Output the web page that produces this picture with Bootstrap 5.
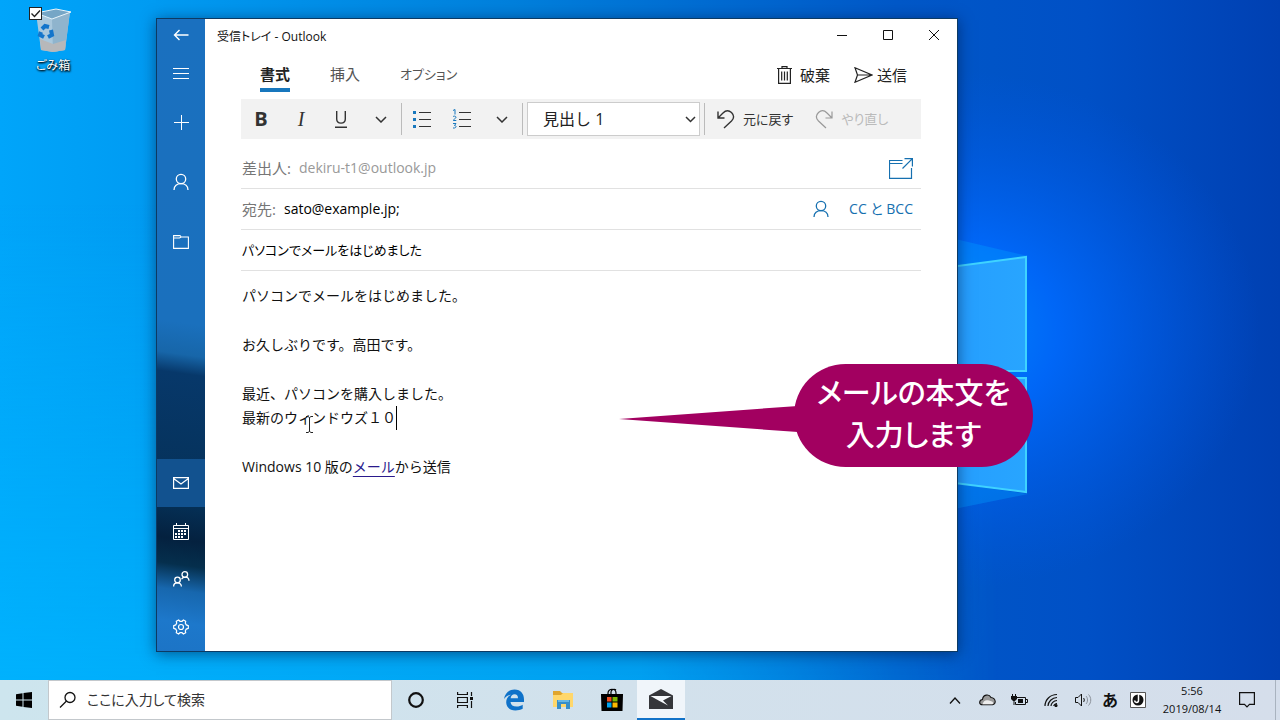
<!DOCTYPE html>
<html lang="ja">
<head>
<meta charset="utf-8">
<meta name="viewport" content="width=device-width, initial-scale=1">
<title>受信トレイ - Outlook</title>
<link rel="stylesheet" href="https://cdn.jsdelivr.net/npm/bootstrap@5.3.0/dist/css/bootstrap.min.css">
<style>
  body { font-family: "Open Sans", "Noto Sans CJK JP", sans-serif; font-feature-settings: "palt"; font-size: 14px; line-height: 20px; color: #222; }
  button, input, select { font-feature-settings: inherit; }
  button { color: inherit; }
  svg { display: block; fill: none; }
  :where(svg:not([stroke])) { stroke: currentColor; }
  .plain { border: 0; background: transparent; padding: 0; display: flex; align-items: center; justify-content: center; }
  .desk { background: #0078e0; min-height: 0; }
  .wallpaper { position: absolute; width: 100%; height: 100%; }

  .desk-icon { position: absolute; left: 16px; top: 4px; width: 74px; color: #fff; font-size: 12px; line-height: 16px; text-shadow: 0 1px 2px #000, 1px 1px 2px #000; }
  .desk-icon input { position: absolute; left: 13px; top: 3px; width: 13px; height: 13px; margin: 0; appearance: none; background: #fff; border: 1px solid #222; }
  .desk-icon .tick { position: absolute; left: 14px; top: 4px; color: #222; }
  .desk-icon label { padding-top: 4px; }

  .app-window { position: absolute; left: 156px; right: 322px; top: 18px; bottom: 28px; background: #fff; border: 1px solid #0c3a63; box-shadow: 0 2px 14px rgba(0,20,60,.55); }
  .rail { width: 48px; color: #fff; background:
    linear-gradient(188deg, #1a70bf 0%, #1a70bd 48%, #1766a9 53%, #07386a 56%, #053158 76%, #04213f 82%, #052f4d 86%, #1767ae 90%, #1d78cb 95%, #1c74c6 100%); }
  .rail .plain { width: 48px; height: 48px; flex: none; }
  .rail .back { height: 31px; }
  .rail .spaced { margin-top: 12px; }
  .rail .current { background: #12528f; }

  .title-bar { height: 32px; font-size: 12px; color: #111; }
  .title-bar .plain { width: 46px; height: 32px; }
  .tabs { height: 48px; gap: 40px; padding: 0 14px 0 19px; }
  .tabs .tab { height: 38px; margin-top: 3px; border-bottom: 4px solid transparent; padding-top: 6px; align-self: flex-start; color: #555; font-size: 15px; }
  .tabs .tab.current { color: #222; font-weight: 700; border-color: #1777bd; }
  .tabs .tab.kana { font-size: 13px; }
  .tabs .command { font-size: 15px; gap: 8px; }
  .content { padding: 0 36px; }
  .format-bar { height: 40px; background: #f2f2f2; margin-bottom: 9px; color: #333; font-size: 13px; }
  .format-bar .tool { width: 40px; height: 40px; font-size: 20px; }
  .format-bar .slanted { font-family: "Liberation Serif", serif; font-style: italic; }
  .format-bar .rule { width: 1px; height: 32px; background: #bbb; }
  .format-bar .redo { color: #bbb; margin-left: 22px; }
  .style-pick { width: 173px; height: 34px; margin: 0 4px; }
  .style-pick select { width: 100%; height: 34px; appearance: none; background: #fff; border: 1px solid #ccc; padding: 0 28px 0 15px; font-size: 16px; color: #222; border-radius: 0; font-feature-settings: normal; }
  .style-pick svg { position: absolute; right: 4px; top: 14px; }
  .field { height: 41px; border-bottom: 1px solid #e1e1e1; color: #767676; padding-left: 1px; }
  .field label { font-size: 15px; }
  .field input { border: 0; padding: 0; background: transparent; outline: 0; color: #000; min-width: 0; }
  .field input:disabled { color: #999; }
  .field .subject { font-size: 13px; }
  .accent, .accent:hover { color: #1670b0; text-decoration: none; }
  .letter { padding: 13px 1px 0; line-height: 24px; font-feature-settings: normal; color: #111; outline: 0; }
  .letter p { margin: 0 0 25px; }
  .letter a { color: #2a1a8c; text-underline-offset: 4px; }
  .caret { display: inline-block; width: 1px; height: 24px; background: #000; vertical-align: top; }
  .pointer { position: absolute; left: 304px; top: 416px; color: #222; }

  .callout { position: absolute; right: 247px; top: 364px; width: 239px; height: 103px; border-radius: 52px; background: #a20060; color: #fff; font-size: 29px; font-weight: 500; line-height: 42px; padding-top: 8px; }
  .callout svg { position: absolute; right: 235px; top: 41px; }

  .taskbar { height: 40px; background: linear-gradient(90deg, #cde5ee, #d2e1ec 50%, #d5deeb); color: #111; flex: none; }
  .taskbar .plain { width: 48px; height: 40px; flex: none; }
  .taskbar .active-app { background: #f0f5fa; border-bottom: 2px solid #1272c8; }
  .task-list { gap: 1px; }
  .search { width: 344px; height: 40px; background: #fff; border: 1px solid #c3c8cc; gap: 10px; padding-left: 10px; }
  .search input { border: 0; outline: 0; padding: 0; background: transparent; min-width: 0; }
  .search input::placeholder { color: #333; opacity: 1; }
  .taskbar .tray { width: 32px; }
  .taskbar .ime { width: 22px; font-size: 16px; font-weight: 700; }
  .taskbar .ime-state { width: 34px; }
  .taskbar .clock { width: 74px; font-size: 11px; line-height: 18px; flex-direction: column; }
  .taskbar .notice { width: 36px; }
  .show-desk { width: 5px; border-left: 1px solid #a9b3bf; margin-left: 10px; }
</style>
</head>
<body class="d-flex flex-column vh-100 overflow-hidden">

<main class="desk position-relative flex-grow-1">
  <svg class="wallpaper" viewBox="0 0 1280 680" preserveAspectRatio="none" stroke="none" aria-hidden="true">
    <defs>
      <linearGradient id="base"><stop offset="0" stop-color="#00a5fa"/><stop offset=".12" stop-color="#009bf2"/><stop offset=".4" stop-color="#0080dc"/><stop offset=".7" stop-color="#0058c8"/><stop offset=".85" stop-color="#0050c6"/><stop offset="1" stop-color="#0040b2"/></linearGradient>
      <linearGradient id="low" x2="0" y2="1"><stop offset=".3" stop-color="#00b8ff" stop-opacity="0"/><stop offset="1" stop-color="#00b8ff" stop-opacity=".65"/></linearGradient>
      <linearGradient id="fade"><stop offset="0" stop-color="#fff"/><stop offset=".5" stop-color="#fff"/><stop offset=".78" stop-color="#000"/></linearGradient>
      <mask id="left"><path fill="url(#fade)" d="M0 0H1280V680H0Z"/></mask>
      <radialGradient id="glow"><stop offset="0" stop-color="#0088ff"/><stop offset=".35" stop-color="#006aff" stop-opacity=".85"/><stop offset="1" stop-color="#0058e8" stop-opacity="0"/></radialGradient>
      <linearGradient id="pane"><stop offset="0" stop-color="#2296ff"/><stop offset="1" stop-color="#28a5ff"/></linearGradient>
    </defs>
    <path fill="url(#base)" d="M0 0H1280V680H0Z"/>
    <path fill="url(#low)" mask="url(#left)" d="M0 0H1280V680H0Z"/>
    <ellipse cx="950" cy="330" rx="310" ry="260" fill="url(#glow)"/>
    <path fill="#00a0ff" fill-opacity=".35" d="M900 226L1028 256L900 274ZM900 520L1028 494L900 476Z"/>
    <path fill="url(#pane)" stroke="#3fd3ff" stroke-width="2" d="M860 279L1026 257V371H860ZM860 378H1026V492L860 471Z"/>
  </svg>

  <div class="desk-icon text-center">
    <svg width="42" height="50" viewBox="0 0 42 50" class="mx-auto" stroke="none">
      <path d="M4 9L20 15L38 7L33 46L21 48L9 46Z" fill="#a9c8dd"/>
      <path d="M20 15L38 8L33 46L21 48Z" fill="#8fb4cd"/>
      <path d="M4 9L24 5L39 8L20 15Z" fill="#76a6c6" stroke="#e8f4fa"/>
      <path d="M8 35L21 40L34 36L33 46L21 48L9 46Z" fill="#b7b8ba"/>
      <g stroke="#1375cb" stroke-width="4"><path d="M10 25L13 22L17 23"/><path d="M19 26L20 31L16 33"/><path d="M12 33L8 31L9 28"/></g>
    </svg>
    <input type="checkbox" id="bin" checked>
    <svg class="tick" width="11" height="11" viewBox="0 0 11 11" stroke-width="1.4"><path d="M1.500 5.500L4.500 8.500L10 2.500"/></svg>
    <label for="bin">ごみ箱</label>
  </div>

  <section class="app-window d-flex" aria-label="メール">
    <nav class="rail d-flex flex-column flex-shrink-0">
      <button class="plain back" aria-label="戻る"><svg width="16" height="12" viewBox="0 0 16 12" stroke-width="1.4"><path d="M15.500 6H1.500M6.500 1L1.500 6L6.500 11"/></svg></button>
      <button class="plain" aria-label="メニュー"><svg width="16" height="12" viewBox="0 0 16 12"><path d="M0 .5H16M0 5.500H16M0 10.500H16"/></svg></button>
      <button class="plain" aria-label="新規"><svg width="15" height="15" viewBox="0 0 15 15"><path d="M0 7.500H15M7.500 0V15"/></svg></button>
      <button class="plain spaced" aria-label="アカウント"><svg width="16" height="18" viewBox="0 0 16 18" stroke-width="1.3"><circle cx="8" cy="6" r="4.700"/><path d="M1 17C1 13 4 10.700 8 10.700S15 13 15 17"/></svg></button>
      <button class="plain spaced" aria-label="フォルダー"><svg width="16" height="14" viewBox="0 0 16 14" stroke-width="1.100"><path d="M.6 .6H7L8.200 2H15.400V13.400H.6ZM.6 3H6.500L8.200 2"/></svg></button>
      <button class="plain current mt-auto" aria-label="メール"><svg width="16" height="12" viewBox="0 0 16 12" stroke-width="1.200"><path d="M.6 .6H15.400V11.400H.6ZM.6 1.500L8 7L15.400 1.500"/></svg></button>
      <button class="plain" aria-label="予定表"><svg width="16" height="17" viewBox="0 0 16 17"><path d="M.5 2.500H15.500V16.500H.5ZM.5 5.500H15.500M3.500 0V3M12.500 0V3"/><path stroke-width="2" stroke-dasharray="2 1" d="M5 8H13.500M2 11H13.500M2 14H10.500"/></svg></button>
      <button class="plain" aria-label="連絡先"><svg width="17" height="16" viewBox="0 0 17 16" stroke-width="1.300"><circle cx="4.500" cy="9" r="2.800"/><path d="M.6 15.500C.6 10.500 8.400 10.500 8.400 15.500"/><circle cx="11.800" cy="3.500" r="2.800"/><path d="M8.500 8.300C10 5.500 15.700 5 16 9.800"/></svg></button>
      <button class="plain" aria-label="設定"><svg width="16" height="16" viewBox="0 0 16 16" stroke-width="1.200"><circle cx="8" cy="8" r="2.500"/><path d="M5.600 1L7 2.300H9L10.400 1L12.700 2.300L12.300 4.200L13.300 5.900L15.300 6.600V9.400L13.300 10.100L12.300 11.800L12.700 13.700L10.400 15L9 13.700H7L5.600 15L3.300 13.700L3.700 11.800L2.700 10.100L.7 9.400V6.600L2.700 5.900L3.700 4.200L3.300 2.300Z"/></svg></button>
    </nav>

    <div class="flex-grow-1 overflow-hidden">
      <header class="title-bar d-flex align-items-center">
        <span class="ms-2 ps-1 me-auto pt-1">受信トレイ - Outlook</span>
        <button class="plain" aria-label="最小化"><svg width="10" height="10" viewBox="0 0 10 10"><path d="M0 5.500H10"/></svg></button>
        <button class="plain" aria-label="最大化"><svg width="10" height="10" viewBox="0 0 10 10"><path d="M.5 .5H9.500V9.500H.5Z"/></svg></button>
        <button class="plain" aria-label="閉じる"><svg width="10" height="10" viewBox="0 0 10 10"><path d="M0 0L10 10M10 0L0 10"/></svg></button>
      </header>

      <div class="content">
        <div class="tabs d-flex align-items-center">
          <button class="plain tab current">書式</button>
          <button class="plain tab">挿入</button>
          <button class="plain tab kana">オプション</button>
          <div class="d-flex gap-4 ms-auto">
            <button class="plain command"><svg width="15" height="18" viewBox="0 0 15 18" stroke-width="1.200"><path d="M0 2.500H15M1.600 2.500V17.400H13.400V2.500M5 2.500V.6H10V2.500M4.700 5.500V14.500M7.500 5.500V14.500M10.300 5.500V14.500"/></svg>破棄</button>
            <button class="plain command gap-1"><svg width="19" height="16" viewBox="0 0 19 16" stroke-width="1.200"><path d="M1 .8L18 8L1 15.200L3.500 8ZM3.500 8H18"/></svg>送信</button>
          </div>
        </div>

        <div class="format-bar d-flex align-items-center">
          <button class="plain tool fw-bold" aria-label="太字">B</button>
          <button class="plain tool slanted" aria-label="斜体">I</button>
          <button class="plain tool" aria-label="下線"><svg width="12" height="18" viewBox="0 0 12 18" stroke-width="1.400"><path d="M1.700 1V9C1.700 14.500 10.300 14.500 10.300 9V1M0 17.300H12"/></svg></button>
          <button class="plain tool" aria-label="文字の書式"><svg width="12" height="7" viewBox="0 0 12 7" stroke-width="1.500"><path d="M1 1L6 6L11 1"/></svg></button>
          <span class="rule"></span>
          <button class="plain tool" aria-label="箇条書き"><svg width="18" height="18" viewBox="0 0 18 18"><path d="M6 2.500H18M6 9.500H18M6 16.500H18"/><path stroke="#1777bd" stroke-width="3" d="M0 2.500H3M0 9.500H3M0 16.500H3"/></svg></button>
          <button class="plain tool" aria-label="段落番号"><svg width="18" height="20" viewBox="0 0 18 20"><path d="M6 3.500H18M6 10.500H18M6 17.500H18"/><path stroke="#1777bd" d="M0 1.500L2 .5V5.500M0 8C0 6.800 3 6.800 3 8.300C3 9.500 0 10.500 .3 11.500H3.300M0 14.500H3L1.500 16.500C4 16.500 3.500 19.500 0 19"/></svg></button>
          <button class="plain tool" aria-label="段落の書式"><svg width="12" height="7" viewBox="0 0 12 7" stroke-width="1.500"><path d="M1 1L6 6L11 1"/></svg></button>
          <span class="rule"></span>
          <div class="style-pick position-relative">
            <select aria-label="スタイル"><option>見出し 1</option><option>標準</option></select>
            <svg width="11" height="7" viewBox="0 0 11 7" stroke-width="1.500"><path d="M1 1L5.500 5.500L10 1"/></svg>
          </div>
          <span class="rule"></span>
          <button class="plain gap-2 ms-2 ps-1"><svg width="18" height="19" viewBox="0 0 18 19" stroke-width="1.400"><path d="M1 1.500V8H7.500M1 8L6 3C9 0 12 .3 14.500 2.500C17.500 5.500 17 8.500 14.500 11L7 18"/></svg>元に戻す</button>
          <button class="plain gap-2 redo" disabled><svg width="18" height="19" viewBox="0 0 18 19" stroke="#999" stroke-width="1.200"><path d="M17 1.500V8H10.500M17 8L12 3C9 0 6 .3 3.500 2.500C.5 5.500 1 8.500 3.500 11L11 18"/></svg>やり直し</button>
        </div>

        <div class="field d-flex align-items-center">
          <label for="from" class="me-2">差出人:</label>
          <input id="from" class="flex-grow-1" value="dekiru-t1@outlook.jp" disabled>
          <button class="plain accent me-2" aria-label="新しいウィンドウ"><svg width="24" height="21" viewBox="0 0 24 21" stroke-width="1.200"><path d="M13.500 2.500H.5V20.400H22.500V10M.5 5.500H13.500M15.500 .6H23.400V8.500M23.400 .6L13.500 10.500"/></svg></button>
        </div>
        <div class="field d-flex align-items-center">
          <label for="to" class="me-2">宛先:</label>
          <input id="to" class="flex-grow-1" value="sato@example.jp;">
          <button class="plain accent" aria-label="連絡先の選択"><svg width="16" height="18" viewBox="0 0 16 18" stroke-width="1.300"><circle cx="8" cy="6" r="4.700"/><path d="M1 17C1 13 4 10.700 8 10.700S15 13 15 17"/></svg></button>
          <a href="#" class="accent ms-3 ps-1 me-2">CC と BCC</a>
        </div>
        <div class="field d-flex align-items-center">
          <input class="subject flex-grow-1" aria-label="件名" value="パソコンでメールをはじめました">
        </div>

        <article class="letter" contenteditable="true" role="textbox" aria-label="本文" spellcheck="false">
          <p>パソコンでメールをはじめました。</p>
          <p>お久しぶりです。高田です。</p>
          <p>最近、パソコンを購入しました。<br>最新のウィンドウズ１０<span class="caret"></span></p>
          <p>Windows 10 版の<a href="#">メール</a>から送信</p>
        </article>
      </div>
    </div>
  </section>

  <svg class="pointer" width="10" height="17" viewBox="0 0 10 17" aria-hidden="true"><path d="M2 .5H4L5.500 1.500L7 .5H9M5.500 1.500V15.500M2 16.500H4L5.500 15.500L7 16.500H9"/></svg>

  <div class="callout text-center">
    <svg width="179" height="30" viewBox="0 0 179 30" stroke="none"><path fill="#a20060" d="M0 14L179 1V27Z"/></svg>
    メールの本文を<br>入力します
  </div>
</main>

<footer class="taskbar d-flex">
  <button class="plain" aria-label="スタート"><svg width="16" height="16" viewBox="0 0 16 16" stroke="none"><path fill="#000" d="M0 2.200L6.500 1.300V7.500H0ZM7.500 1.100L16 0V7.500H7.500ZM0 8.500H6.500V14.700L0 13.800ZM7.500 8.500H16V16L7.500 14.900Z"/></svg></button>
  <div class="search d-flex align-items-center">
    <svg width="18" height="18" viewBox="0 0 18 18" stroke-width="1.300"><circle cx="11" cy="6.500" r="5"/><path d="M7.500 10L1 16.500"/></svg>
    <input class="flex-grow-1" type="search" aria-label="検索" placeholder="ここに入力して検索">
  </div>
  <div class="task-list d-flex me-auto">
    <button class="plain" aria-label="Cortana"><svg width="18" height="18" viewBox="0 0 18 18" stroke-width="2.200"><circle cx="9" cy="9" r="6.800"/></svg></button>
    <button class="plain" aria-label="タスク ビュー"><svg width="17" height="16" viewBox="0 0 17 16" stroke-width="1.200"><path d="M.6 0V2.500H10.400V0M.6 16V13.500H10.400V16M.6 5.500H10.400V10.500H.6ZM14.500 0V4M14.500 9V16"/><path d="M13 5H16V8H13Z" fill="#111" stroke="none"/></svg></button>
    <button class="plain" aria-label="Edge"><svg width="22" height="22" viewBox="0 0 22 22" stroke="none"><path fill="#0f72c9" d="M1 10C2 3.500 6.500 .5 11.500 .5C18 .5 21 5 21 10.500V13H7.500C7.800 16 10 17.500 13.500 17.500C16 17.500 18 16.800 19.700 15.700V19.800C17.500 21 15 21.500 12.500 21.500C6.500 21.500 3.200 17.900 3.200 13.300C3.200 10 5 7.200 8 5.800C4.500 6 2.500 7.700 1 10ZM7.600 9.300H15C15 6.800 13.800 5.300 11.500 5.300C9.500 5.300 8 6.800 7.600 9.300Z"/></svg></button>
    <button class="plain" aria-label="エクスプローラー"><svg width="22" height="20" viewBox="0 0 22 20" stroke="none"><path fill="#e0a52d" d="M1 1H8L10 3H20V8H1Z"/><path fill="#ffd76b" d="M1 5H9L11 3H21V17H1Z"/><path fill="#388fc9" d="M5 10H18V19H14V14H9V19H5Z"/><path fill="#67b8e6" d="M6 10H17V12H6Z"/></svg></button>
    <button class="plain" aria-label="Microsoft Store"><svg width="24" height="24" viewBox="0 0 24 24" stroke="none"><path d="M8 7V5C8 0 16 0 16 5V7M11 6V4C11 1 15 1 16 2" stroke="#000" stroke-width="1.200"/><path fill="#000" d="M1 6H23L22.500 23H1.500Z"/><path fill="#f05024" d="M7 9H11.500V13.500H7Z"/><path fill="#7db900" d="M12.500 9H17.500V13.500H12.500Z"/><path fill="#00a3ee" d="M7 14.500H11.500V19.500H7Z"/><path fill="#fdb900" d="M12.500 14.500H17.500V19.500H12.500Z"/></svg></button>
    <button class="plain active-app" aria-label="メール"><svg width="24" height="20" viewBox="0 0 24 20" stroke="none"><path fill="#35363a" d="M0 6.500L12 0L24 6.500V20H0Z"/><path fill="#f6f9fc" d="M1.500 7H22.500L14 11.500L19 16.500L10.500 12Z"/></svg></button>
  </div>
  <button class="plain tray" aria-label="隠れているインジケーター"><svg width="12" height="7" viewBox="0 0 12 7" stroke-width="1.300"><path d="M1 6.500L6 1L11 6.500"/></svg></button>
  <button class="plain tray" aria-label="OneDrive"><svg width="17" height="12" viewBox="0 0 17 12" stroke-width="1.100"><path fill="#999" d="M3.500 10.800C-.5 10.500 0 6 3.500 5.500C4 .5 10-.5 12 3.500C17 4 17.500 10 13.500 10.800Z"/><path fill="#eee" stroke="none" d="M3.500 10.300C5 6 7 5 13 7.500C15 9 14 10.300 13 10.300Z"/></svg></button>
  <button class="plain tray" aria-label="電源"><svg width="17" height="12" viewBox="0 0 17 12"><path d="M6 3.500H14.500V10.500H4.500V8M14.500 5.500H16.500V8.500H14.500M1.500 0V2M4.500 0V2M3 6V11"/><path fill="#111" stroke="none" d="M0 2H6V5L4 7H2L0 5ZM7 5H12V9H7Z"/></svg></button>
  <button class="plain tray" aria-label="ネットワーク"><svg width="14" height="14" viewBox="0 0 14 14" stroke-width="1.200"><path d="M1 13C1 7 6 1.500 13 1.500M4 13C4 9 8 4.500 13 4.500M7 13C7 10.500 9.500 7.500 13 7.500M9.800 13C9.800 12 11.500 10.500 13 10.500"/><circle cx="12" cy="12.500" r="1" fill="#111"/></svg></button>
  <button class="plain tray" aria-label="音量"><svg width="17" height="14" viewBox="0 0 17 14"><path d="M.5 4.500H3L6.500 1V13L3 9.500H.5ZM8.500 5C9.500 6 9.500 8 8.500 9"/><path stroke="#8b919a" d="M11 3C13 5 13 9 11 11M13.500 1.500C16.500 4.500 16.500 9.500 13.500 12.500"/></svg></button>
  <button class="plain ime" aria-label="入力モード">あ</button>
  <button class="plain ime-state" aria-label="IME"><svg width="16" height="16" viewBox="0 0 16 16"><path fill="#fff" stroke="#555" d="M.5 .5H15.500V15.500H.5Z"/><circle cx="8" cy="8" r="5.500" fill="#111" stroke="none"/><path stroke="#fff" stroke-width="1.500" d="M8.500 2V8.500C8.500 11 5 11 4.500 8.500"/></svg></button>
  <button class="plain clock"><span>5:56</span><span>2019/08/14</span></button>
  <button class="plain notice" aria-label="通知"><svg width="16" height="16" viewBox="0 0 16 16" stroke-width="1.200"><path d="M.6 .6H15.400V12.400H10.500L8 15L5.500 12.400H.6Z"/></svg></button>
  <div class="show-desk"></div>
</footer>

<script src="https://cdn.jsdelivr.net/npm/bootstrap@5.3.0/dist/js/bootstrap.bundle.min.js"></script>
</body>
</html>
